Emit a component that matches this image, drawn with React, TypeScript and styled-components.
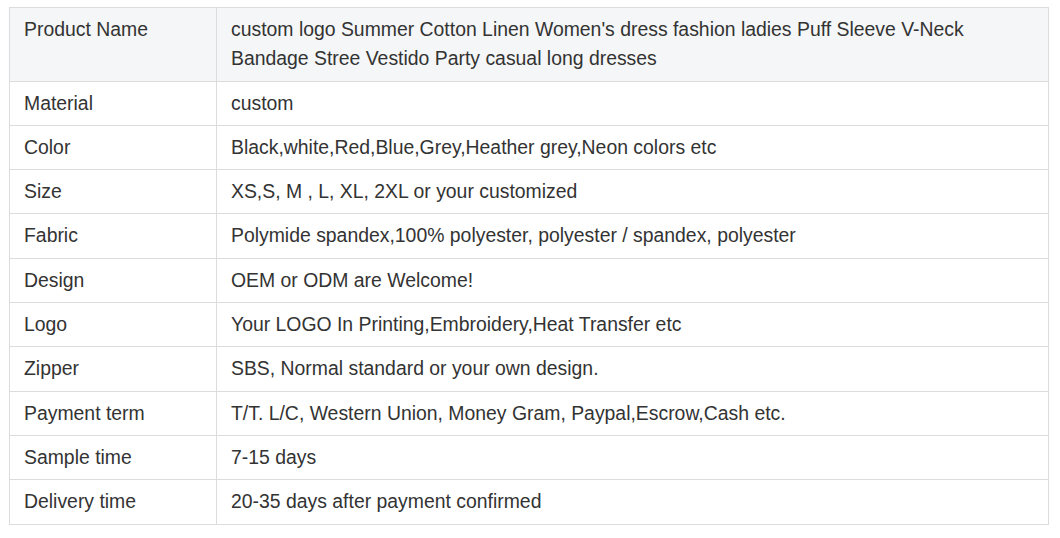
import styled, { createGlobalStyle } from "styled-components";

const GlobalStyle = createGlobalStyle`
  body {
    margin: 0;
    background: #ffffff;
    font-family: "Liberation Sans", Arial, sans-serif;
  }
`;

const Page = styled.div`
  padding: 7px 11px 0 9px;
`;

const Table = styled.table`
  width: 1040px;
  border-collapse: collapse;
  border: 1px solid #dcdcdc;
  color: #333333;
  font-family: "Liberation Sans", Arial, sans-serif;
  font-size: 19.4px;
`;

const Row = styled.tr<{ shaded?: boolean }>`
  background: ${({ shaded }) => (shaded ? "#f5f6f7" : "#ffffff")};
`;

const Cell = styled.td<{ label?: boolean }>`
  border: 1px solid #dcdcdc;
  padding: 7px 14px;
  line-height: 29.3px;
  vertical-align: top;
  width: ${({ label }) => (label ? "178px" : "auto")};
`;

const rows: [string, string][] = [
  [
    "Product Name",
    "custom logo Summer Cotton Linen Women's dress fashion ladies Puff Sleeve V-Neck Bandage Stree Vestido Party casual long dresses",
  ],
  ["Material", "custom"],
  ["Color", "Black,white,Red,Blue,Grey,Heather grey,Neon colors etc"],
  ["Size", "XS,S, M , L, XL, 2XL or your customized"],
  ["Fabric", "Polymide spandex,100% polyester, polyester / spandex, polyester"],
  ["Design", "OEM or ODM are Welcome!"],
  ["Logo", "Your LOGO In Printing,Embroidery,Heat Transfer etc"],
  ["Zipper", "SBS, Normal standard or your own design."],
  ["Payment term", "T/T. L/C, Western Union, Money Gram, Paypal,Escrow,Cash etc."],
  ["Sample time", "7-15 days"],
  ["Delivery time", "20-35 days after payment confirmed"],
];

export default function App() {
  return (
    <Page>
      <GlobalStyle />
      <Table>
        <tbody>
          {rows.map(([name, value], i) => (
            <Row key={name} shaded={i === 0}>
              <Cell label>{name}</Cell>
              <Cell>{value}</Cell>
            </Row>
          ))}
        </tbody>
      </Table>
    </Page>
  );
}
